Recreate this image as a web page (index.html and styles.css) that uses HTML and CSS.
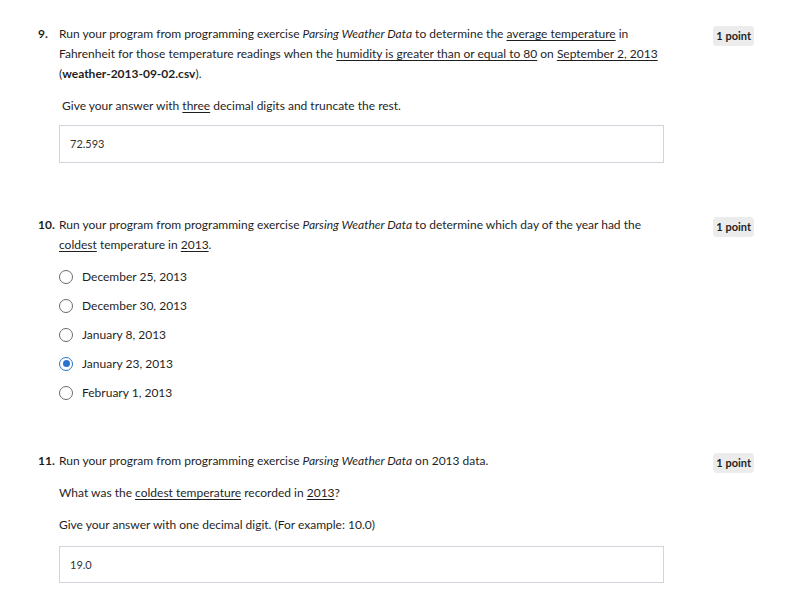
FILE: index.html
```html
<!DOCTYPE html>
<html>
<head>
<meta charset="utf-8">
<link rel="stylesheet" href="styles.css">
</head>
<body>
<div class="page">
  <div class="question q9">
    <div class="num">9.</div>
    <div class="content">
      <p class="prompt">Run your program from programming exercise <em>Parsing Weather Data</em> to determine the <u>average temperature</u> in Fahrenheit for those temperature readings when the <u>humidity is greater than or equal to 80</u> on <u>September 2, 2013</u> (<b>weather-2013-09-02.csv</b>).</p>
      <p class="note">&nbsp;Give your answer with <u>three</u> decimal digits and truncate the rest.</p>
      <div class="answer">72.593</div>
    </div>
    <div class="badge">1 point</div>
  </div>

  <div class="question q10">
    <div class="num">10.</div>
    <div class="content">
      <p class="prompt">Run your program from programming exercise <em>Parsing Weather Data</em> to determine which day of the year had the <u>coldest</u> temperature in <u>2013</u>.</p>
      <ul class="options">
        <li class="option"><span class="radio"></span>December 25, 2013</li>
        <li class="option"><span class="radio"></span>December 30, 2013</li>
        <li class="option"><span class="radio"></span>January 8, 2013</li>
        <li class="option"><span class="radio checked"></span>January 23, 2013</li>
        <li class="option"><span class="radio"></span>February 1, 2013</li>
      </ul>
    </div>
    <div class="badge">1 point</div>
  </div>

  <div class="question q11">
    <div class="num">11.</div>
    <div class="content">
      <p class="prompt">Run your program from programming exercise <em>Parsing Weather Data</em> on 2013 data.</p>
      <p class="sub">What was the <u>coldest temperature</u> recorded in <u>2013</u>?</p>
      <p class="sub">Give your answer with one decimal digit. (For example: 10.0)</p>
      <div class="answer">19.0</div>
    </div>
    <div class="badge">1 point</div>
  </div>
</div>
</body>
</html>
```
FILE: styles.css
```css
html, body {
  margin: 0;
  padding: 0;
  background: #ffffff;
}
body {
  font-family: Lato, "Open Sans", sans-serif;
  font-size: 12px;
  line-height: 20px;
  color: #1f1f1f;
}
.page {
  padding: 24px 39px 0 38px;
}
p { margin: 0; }
u {
  text-decoration: underline;
  text-underline-offset: 2px;
}
.question {
  display: flex;
  align-items: flex-start;
}
.num {
  width: 21px;
  flex: none;
  font-weight: 700;
}
.content {
  width: 605px;
  flex: none;
}
.badge {
  margin-left: auto;
  margin-top: 2px;
  background: #ececec;
  border-radius: 4px;
  font-size: 11px;
  font-weight: 700;
  line-height: 20px;
  padding: 0 3px;
  color: #1f1f1f;
}
.note {
  margin-top: 12px;
}
.answer {
  margin-top: 9px;
  height: 36px;
  border: 1px solid #d4d4dc;
  box-sizing: content-box;
  padding: 0 10px;
  font-size: 11px;
  line-height: 36px;
  color: #333;
}
.q10 { margin-top: 52px; }
.options {
  list-style: none;
  margin: 7px 0 0;
  padding: 0;
}
.option {
  display: flex;
  align-items: center;
  height: 29px;
}
.radio {
  width: 12px;
  height: 12px;
  border: 1.5px solid #6b6b6b;
  border-radius: 50%;
  margin-right: 9px;
  flex: none;
  position: relative;
}
.radio.checked {
  border-color: #2a73cc;
}
.radio.checked::after {
  content: "";
  position: absolute;
  left: 2.5px;
  top: 2.5px;
  width: 7px;
  height: 7px;
  border-radius: 50%;
  background: #2a73cc;
}
.q11 { margin-top: 44px; }
.sub { margin-top: 12px; }
.q11 .answer { margin-top: 11px; height: 35px; line-height: 35px; }
```
